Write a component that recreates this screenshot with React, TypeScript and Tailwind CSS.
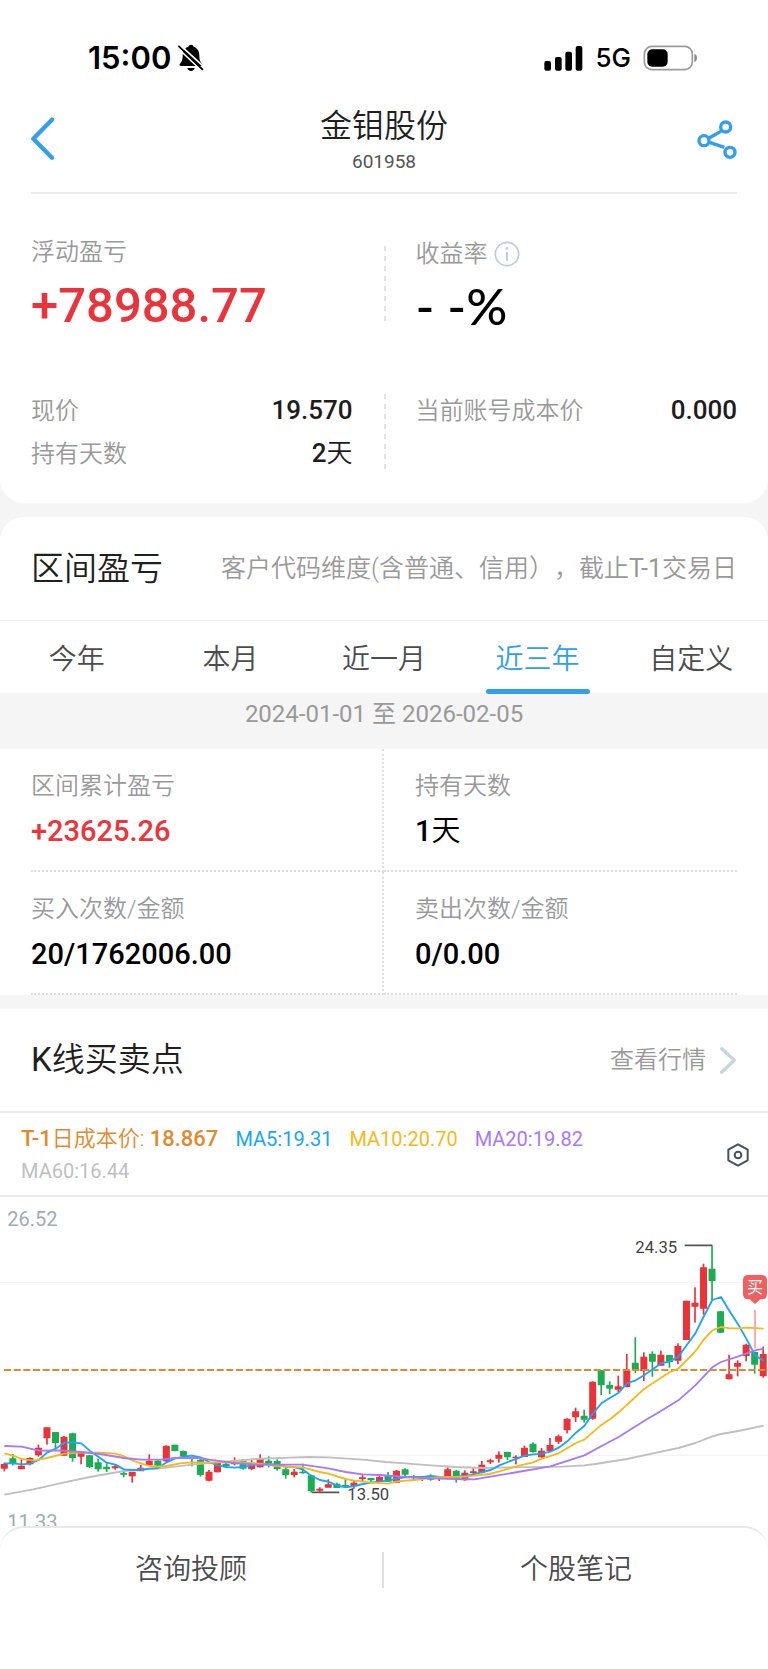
import type { ReactNode } from 'react';

type Candle = [tone: 'R' | 'G', high: number, low: number, top: number, bottom: number];

const STEP = 25.58;
const START = 13;

const shift = (base: number, rows: Candle[]): Candle[] =>
  rows.map(([t, h, l, a, b]) => [t, h + base, l + base, a + base, b + base]);

const CANDLES: Candle[] = [
  ...shift(552, [
    ['R', 248, 274, 253, 265], ['G', 222, 256, 236, 250], ['R', 236, 267, 258, 267],
    ['R', 232, 256, 235, 252], ['R', 194, 230, 204, 225], ['R', 142, 194, 143, 174],
    ['G', 156, 204, 157, 188], ['R', 168, 227, 171, 226], ['G', 158, 245, 161, 233],
    ['R', 217, 253, 218, 229], ['G', 225, 264, 227, 260], ['G', 236, 275, 248, 267],
    ['G', 250, 276, 261, 267], ['R', 253, 269, 260, 264], ['G', 270, 292, 280, 283],
    ['R', 276, 308, 276, 288], ['R', 255, 273, 264, 273], ['R', 223, 256, 243, 255],
    ['G', 240, 259, 243, 256], ['R', 196, 246, 198, 243], ['G', 194, 214, 195, 212],
    ['G', 212, 230, 214, 228], ['G', 230, 259, 232, 236], ['G', 237, 290, 240, 284],
    ['R', 270, 304, 276, 301], ['R', 247, 277, 249, 276], ['G', 248, 262, 252, 258],
    ['R', 232, 256, 248, 252], ['G', 237, 269, 243, 265], ['R', 240, 271, 252, 266],
    ['R', 223, 262, 236, 261], ['G', 229, 262, 243, 249], ['G', 238, 272, 244, 266],
    ['G', 262, 296, 269, 284], ['R', 267, 292, 276, 284], ['G', 251, 281, 276, 279],
    ['G', 284, 338, 287, 332], ['R', 322, 337, 327, 331], ['R', 298, 322, 314, 322],
    ['G', 308, 324, 312, 323], ['G', 296, 322, 316, 319], ['R', 302, 326, 309, 318],
    ['R', 283, 305, 293, 296], ['G', 294, 306, 295, 300], ['R', 286, 306, 292, 302],
    ['G', 276, 306, 286, 304], ['R', 270, 308, 273, 307], ['G', 265, 288, 269, 283],
    ['G', 285, 302, 289, 292], ['R', 290, 303, 293, 296], ['G', 283, 302, 288, 298],
    ['R', 290, 303, 293, 296], ['R', 262, 298, 269, 296], ['G', 270, 308, 273, 297],
    ['R', 271, 302, 279, 300], ['R', 262, 285, 275, 278], ['R', 243, 280, 255, 277],
    ['R', 236, 252, 242, 246], ['R', 214, 248, 225, 235], ['G', 215, 240, 217, 231],
  ]),
  ...shift(72, [
    ['R', 706, 733, 711, 714], ['R', 677, 711, 684, 710], ['G', 667, 698, 672, 695],
    ['R', 684, 715, 693, 711], ['R', 654, 693, 676, 692], ['R', 644, 672, 650, 664],
    ['R', 595, 640, 597, 630], ['R', 563, 606, 575, 591], ['G', 569, 608, 588, 598],
    ['R', 484, 599, 486, 595], ['G', 450, 525, 452, 495], ['G', 484, 522, 496, 505],
    ['R', 467, 516, 500, 508], ['R', 402, 502, 452, 500], ['G', 352, 459, 429, 450],
    ['R', 397, 483, 411, 452], ['G', 394, 470, 402, 424], ['R', 392, 437, 405, 436],
    ['G', 405, 443, 406, 425], ['R', 370, 433, 379, 421], ['R', 242, 360, 243, 359],
    ['R', 202, 308, 249, 259], ['R', 131, 284, 143, 265], ['G', 77, 240, 147, 182],
    ['G', 273, 338, 275, 337], ['R', 404, 478, 464, 477], ['R', 421, 469, 430, 439],
    ['R', 371, 424, 375, 407], ['G', 395, 461, 397, 433], ['R', 380, 473, 403, 468],
  ]),
];

const join = (...parts: [dx: number, dy: number, points: number[]][]) =>
  parts
    .flatMap(([dx, dy, p]) => p.map((v, i) => (i % 2 === 0 ? v + dx : v + dy)))
    .join(' ');

const AVERAGES = [
  {
    color: '#bfbfbf',
    points: join(
      [0, 552, [13, 344, 100, 328, 193, 307, 269, 291, 372, 273, 423, 269, 474, 266, 576, 254, 650, 247]],
      [768, 552, [0, 237, 100, 233, 160, 231, 217, 232, 320, 239, 390, 246, 448, 250, 525, 256, 602, 261, 680, 264]],
      [1536, 72, [0, 742, 150, 740, 217, 736, 250, 732, 345, 717, 423, 700, 499, 684, 550, 669, 601, 649, 627, 642, 679, 633, 755, 617]],
    ),
  },
  {
    color: '#16a5ff',
    points: join(
      [0, 552, [13, 250, 39, 250, 65, 253, 90, 251, 116, 240, 141, 218, 167, 206, 193, 188, 218, 187, 244, 190, 269, 212, 295, 230, 320, 248, 346, 254, 372, 268, 397, 270, 423, 270, 448, 266, 474, 264, 500, 247, 525, 235, 551, 230, 576, 227, 602, 232, 627, 246, 653, 256, 679, 261, 704, 263, 730, 261, 755, 256]],
      [768, 552, [12, 250, 38, 252, 64, 255, 89, 260, 115, 261, 140, 268, 166, 288, 192, 300, 217, 305, 243, 317, 269, 322, 295, 318, 320, 312, 346, 308, 372, 304, 397, 302, 423, 296, 448, 292, 474, 291, 500, 291, 525, 288, 550, 291, 576, 292, 602, 291, 627, 287, 653, 283, 679, 276, 704, 270, 730, 256]],
      [1536, 72, [0, 721, 38, 707, 64, 703, 89, 701, 115, 695, 140, 683, 166, 664, 192, 638, 217, 618, 243, 580, 269, 549, 295, 533, 320, 518, 346, 489, 371, 481, 396, 466, 422, 448, 448, 430, 474, 424, 499, 410, 525, 374, 550, 340, 576, 288, 601, 240, 627, 231, 653, 274, 679, 314, 704, 358, 730, 407, 755, 422]],
    ),
  },
  {
    color: '#f7b916',
    points: join(
      [0, 552, [13, 220, 39, 227, 65, 237, 100, 242, 141, 234, 193, 221, 244, 218, 300, 218, 346, 221, 372, 229, 397, 241, 423, 250, 448, 258, 474, 260, 500, 258, 540, 250, 576, 247, 627, 248, 704, 246, 755, 249]],
      [768, 552, [64, 258, 140, 262, 192, 276, 217, 281, 269, 297, 295, 302, 346, 308, 397, 311, 423, 304, 474, 300, 525, 294, 576, 291, 627, 290, 700, 282, 730, 274]],
      [1536, 72, [0, 743, 38, 733, 64, 727, 89, 716, 140, 700, 192, 669, 217, 659, 269, 614, 295, 597, 320, 577, 396, 507, 422, 490, 474, 456, 499, 446, 550, 394, 576, 358, 601, 331, 627, 321, 653, 325, 679, 325, 704, 323, 755, 326]],
    ),
  },
  {
    color: '#a777ff',
    points: join(
      [0, 552, [13, 198, 65, 200, 116, 212, 180, 211, 244, 216, 300, 222, 372, 234, 423, 239, 484, 239, 525, 234, 600, 234, 627, 239, 704, 249]],
      [768, 552, [0, 254, 140, 254, 217, 265, 269, 276, 320, 283, 372, 285, 448, 291, 525, 295, 600, 297, 655, 298, 704, 290]],
      [1536, 72, [0, 759, 115, 739, 217, 706, 269, 678, 320, 651, 396, 603, 448, 572, 499, 541, 550, 496, 601, 442, 627, 426, 679, 409, 730, 391, 755, 386]],
    ),
  },
];

const TABS = ['今年', '本月', '近一月', '近三年', '自定义'];

function Num({ children }: { children: ReactNode }) {
  return <span className="font-medium">{children}</span>;
}

function StatusBar() {
  return (
    <div className="flex h-[88px] items-end justify-between pr-[70px] pb-[12px] pl-[88px] font-['Inter','Noto_Sans_CJK_SC',sans-serif]">
      <div className="flex items-center gap-[7px]">
        <span className="text-[31px] leading-9 font-semibold">15:00</span>
        <svg className="h-[28px] w-[26px]" viewBox="0 0 78 84" aria-hidden="true">
          <path d="M31 8c1-4 4-6 8-6s7 2 8 6c11 4 17 14 17 26 0 14 3 20 8 25 3 3 1 7-3 7H9c-4 0-6-4-3-7 5-5 8-11 8-25 0-12 6-22 17-26z" fill="#000" />
          <path d="M28 72h22c-1 5-5 9-11 9s-10-4-11-9z" fill="#000" />
          <path d="M4 1l74 68M-2 11l74 70" stroke="#fff" strokeWidth="5" />
          <path d="M3 7l70 69" stroke="#000" strokeWidth="5.5" strokeLinecap="round" />
        </svg>
      </div>
      <div className="flex items-center">
        <svg className="h-[25px] w-[39px]" viewBox="0 0 117 75" aria-hidden="true">
          <rect x="1" y="45" width="20" height="29" rx="6" />
          <rect x="33" y="33" width="20" height="41" rx="6" />
          <rect x="64" y="17" width="20" height="57" rx="6" />
          <rect x="95" y="0" width="20" height="74" rx="6" />
        </svg>
        <span className="mr-3 ml-3 text-[26px] leading-9 font-medium">5G</span>
        <svg className="h-[26px] w-[55px]" viewBox="0 0 165 78" aria-hidden="true">
          <rect x="4" y="4" width="144" height="70" rx="23" fill="none" stroke="#9b9b9b" strokeWidth="5" />
          <rect x="13" y="13" width="61" height="52" rx="15" />
          <path d="M154 27c5 1 8 6 8 12s-3 11-8 12z" fill="#8c8c8c" />
        </svg>
      </div>
    </div>
  );
}

function Header() {
  return (
    <header className="mx-[31px] flex h-[106px] items-center justify-between border-b-2 border-[#ebebeb]">
      <button type="button" aria-label="返回" className="mb-1 w-10">
        <svg className="block h-[43px] w-[24px]" viewBox="0 0 72 129" fill="none" aria-hidden="true">
          <path d="M63 8L7 65l56 57" stroke="#2f9fee" strokeWidth="13" strokeLinecap="round" strokeLinejoin="round" />
        </svg>
      </button>
      <div className="pt-1 text-center">
        <h1 className="text-[32px] leading-10 font-[350] text-[#1f1f1f]">金钼股份</h1>
        <p className="text-[19px] leading-8 text-[#555]">601958</p>
      </div>
      <button type="button" aria-label="分享" className="w-10">
        <svg className="block h-[40px] w-[40px]" viewBox="0 0 120 120" fill="none" stroke="#2f9fee" strokeWidth="10" aria-hidden="true">
          <path d="M36 54l36-20M37 67l45 15" />
          <circle cx="21" cy="62" r="15" />
          <circle cx="86" cy="21" r="15" />
          <circle cx="99" cy="97" r="15" />
        </svg>
      </button>
    </header>
  );
}

function DashRule() {
  return <div className="h-[77px] w-[2px] shrink-0 bg-[repeating-linear-gradient(to_bottom,#e2e2e2_0_5px,transparent_5px_10px)]" />;
}

function InfoRow({ label, children }: { label: string; children?: ReactNode }) {
  return (
    <div className="flex h-[43px] items-center justify-between">
      <dt className="text-[24px] font-[350] text-[#999]">{label}</dt>
      <dd className="text-[26px] font-[350] text-[#1c1c1c]">{children}</dd>
    </div>
  );
}

function Summary() {
  return (
    <section className="px-[31px] pt-[36px] pb-[28px]">
      <div className="flex items-center">
        <div className="flex-1 pr-[31px]">
          <p className="text-[24px] leading-[44px] font-[350] text-[#999]">浮动盈亏</p>
          <p className="text-[49px] leading-[64px] font-medium text-[#eb333b]">+78988.77</p>
        </div>
        <DashRule />
        <div className="flex-1 pl-[30px]">
          <p className="flex items-center gap-[6px] text-[24px] leading-[44px] font-[350] text-[#999]">
            收益率
            <svg className="h-[26px] w-[26px]" viewBox="0 0 78 78" fill="none" aria-hidden="true">
              <circle cx="39" cy="39" r="35" stroke="#b9cce0" strokeWidth="5" />
              <path d="M39 33v26" stroke="#b9cce0" strokeWidth="6" />
              <circle cx="39" cy="22" r="4" fill="#b9cce0" />
            </svg>
          </p>
          <p className="font-['Lato','Noto_Sans_CJK_SC',sans-serif] text-[51px] leading-[60px] font-medium text-black">- -%</p>
        </div>
      </div>
      <dl className="mt-[51px] flex items-center">
        <div className="flex-1 self-start pr-[31px]">
          <InfoRow label="现价"><Num>19.570</Num></InfoRow>
          <InfoRow label="持有天数"><Num>2</Num>天</InfoRow>
        </div>
        <DashRule />
        <div className="flex-1 self-start pl-[30px]">
          <InfoRow label="当前账号成本价"><Num>0.000</Num></InfoRow>
        </div>
      </dl>
    </section>
  );
}

function Stat({ label, red, children }: { label: string; red?: boolean; children: ReactNode }) {
  return (
    <div className="h-[123px] border-b-2 border-dotted border-[#dedede] pt-[14px] odd:border-r-2 even:pl-[31px]">
      <dt className="text-[24px] leading-[46px] font-[350] text-[#999]">{label}</dt>
      <dd className={red ? 'text-[29px] leading-[44px] font-[350] text-[#f0323a]' : 'text-[29px] leading-[44px] font-[350] text-black'}>{children}</dd>
    </div>
  );
}

function RangeProfit() {
  return (
    <section className="rounded-t-3xl bg-white">
      <div className="flex h-[104px] items-center justify-between border-b border-[#ebeef5] px-[31px]">
        <h2 className="text-[33px] font-[350] text-[#1f1f1f]">区间盈亏</h2>
        <p className="text-[25px] font-[350] text-[#999] [text-spacing-trim:space-all]">客户代码维度(含普通、信用），截止<span className="font-normal">T-1</span>交易日</p>
      </div>
      <div role="tablist" className="grid h-[72px] grid-cols-5">
        {TABS.map((tab) => {
          const active = tab === '近三年';
          return (
            <button
              key={tab}
              type="button"
              role="tab"
              aria-selected={active}
              className={
                active
                  ? 'relative h-[73px] pt-[4px] text-[28px] font-[350] text-[#2f9fee]'
                  : 'h-[73px] pt-[4px] text-[28px] font-[350] text-[#4c4c4c]'
              }
            >
              {tab}
              {active && <span className="absolute inset-x-0 bottom-0 mx-auto h-[5px] w-[104px] rounded-full bg-[#2f9fee]" />}
            </button>
          );
        })}
      </div>
      <p className="h-[56px] bg-[#f5f5f5] text-center text-[24px] leading-[43px] text-[#999]">2024-01-01 至 2026-02-05</p>
      <dl className="mx-[31px] grid grid-cols-2">
        <Stat label="区间累计盈亏" red><Num>+23625.26</Num></Stat>
        <Stat label="持有天数"><Num>1</Num>天</Stat>
        <Stat label="买入次数/金额"><Num>20/1762006.00</Num></Stat>
        <Stat label="卖出次数/金额"><Num>0/0.00</Num></Stat>
      </dl>
    </section>
  );
}

function Chart() {
  return (
    <svg className="block h-auto w-full" viewBox="0 3 2304 1059" role="img" aria-label="K线图">
      <path d="M0 259H2304M0 778H2304" stroke="#f3f3f3" strokeWidth="4" />
      <g fontFamily="Roboto, sans-serif" fontSize="60" fill="#a0abb8">
        <text x="22" y="90">26.52</text>
        <text x="22" y="998">11.33</text>
      </g>
      {CANDLES.map(([tone, high, low, top, bottom], i) => {
        const x = START + i * STEP;
        return (
          <g key={i} fill={tone === 'R' ? '#ec3239' : '#1aae53'}>
            <rect x={x - 2.5} y={high} width="5" height={low - high} />
            <rect x={x - 10.5} y={top - 1} width="21" height={bottom - top + 2} rx="1" />
          </g>
        );
      })}
      <path d="M12 522H2304" stroke="#e08a2e" strokeWidth="5.5" strokeDasharray="21 8" />
      {AVERAGES.map((line) => (
        <polyline key={line.color} points={line.points} fill="none" stroke={line.color} strokeWidth="5.5" strokeLinejoin="round" />
      ))}
      <path d="M2054 148h83M936 889h82" stroke="#555" strokeWidth="5" />
      <g fontFamily="Roboto, sans-serif" fontSize="50" fill="#444">
        <text x="1906" y="170">24.35</text>
        <text x="1042" y="912">13.50</text>
      </g>
      <path d="M2265 342v115" stroke="#f5a0a0" strokeWidth="5" />
      <path d="M2245 237h40q16 0 16 16v41q0 16-16 16h-4l-16 14-16-14h-4q-16 0-16-16v-41q0-16 16-16z" fill="#f06060" />
      <text x="2265" y="292" textAnchor="middle" fontFamily="'Noto Sans CJK SC', sans-serif" fontSize="48" fill="#fff">买</text>
    </svg>
  );
}

function KLine() {
  return (
    <section className="mt-[14px] bg-white">
      <div className="flex h-[104px] items-center justify-between border-b-2 border-[#ebebeb] px-[31px]">
        <h2 className="text-[33px] font-[350] text-[#1f1f1f]"><span className="font-normal">K</span>线买卖点</h2>
        <a href="#quote" className="flex items-center gap-[14px] text-[24px] font-[350] text-[#999]">
          查看行情
          <svg className="h-[27px] w-[17px]" viewBox="0 0 51 81" fill="none" aria-hidden="true">
            <path d="M5 5l38 35L5 76" stroke="#c8d4e3" strokeWidth="10" strokeLinecap="round" strokeLinejoin="round" />
          </svg>
        </a>
      </div>
      <div className="flex h-[84px] items-center justify-between border-b-2 border-[#ebebeb] pt-[2px] pr-[19px] pl-[21px]">
        <div className="flex flex-1 flex-wrap items-center gap-x-[17px] text-[20px] leading-8">
          <span className="text-[22px] font-[350] text-[#e08a2e]"><Num>T-1</Num>日成本价: <Num>18.867</Num></span>
          <span className="text-[#16a5ff]">MA5:19.31</span>
          <span className="text-[#f7b916]">MA10:20.70</span>
          <span className="text-[#a777ff]">MA20:19.82</span>
          <span className="w-full text-[#bfbfbf]">MA60:16.44</span>
        </div>
        <button type="button" aria-label="指标设置">
          <svg className="block h-[24px] w-[22px]" viewBox="0 0 66 72" fill="none" stroke="#46525f" strokeWidth="6" strokeLinejoin="round" aria-hidden="true">
            <path d="M33 4l29 16v32L33 68 4 52V20z" />
            <circle cx="33" cy="36" r="10" />
          </svg>
        </button>
      </div>
      <Chart />
    </section>
  );
}

export default function App() {
  return (
    <main className="bg-[#f5f5f5] font-['Roboto','Noto_Sans_CJK_SC',sans-serif]">
      <div className="mb-[14px] rounded-b-3xl bg-white">
        <StatusBar />
        <Header />
        <Summary />
      </div>
      <RangeProfit />
      <KLine />
      <footer className="relative -mt-[24px] bg-white">
        <div className="rounded-t-3xl border-t-2 border-[#e8e8e8] bg-white pb-[58px]">
          <div className="grid h-[83px] grid-cols-2 items-center text-[28px] font-[350] text-[#4c4c4c]">
            <button type="button" className="h-[36px] border-r-2 border-[#dedede] leading-9">咨询投顾</button>
            <button type="button" className="leading-9">个股笔记</button>
          </div>
        </div>
      </footer>
    </main>
  );
}
